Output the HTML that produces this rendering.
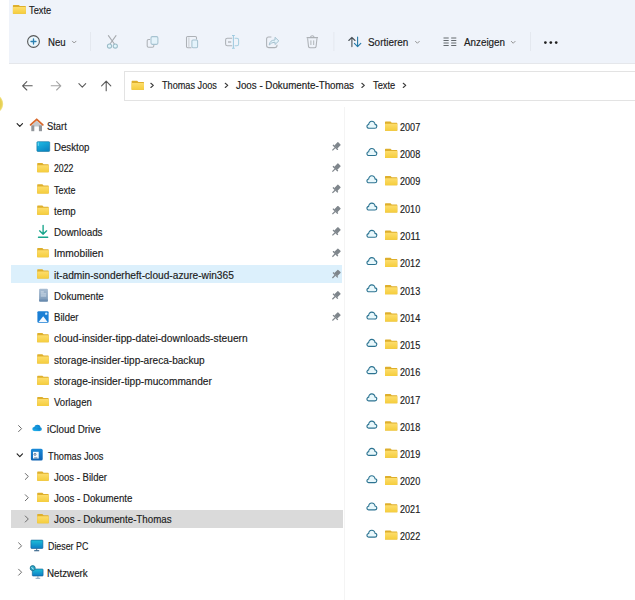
<!DOCTYPE html>
<html><head><meta charset="utf-8"><style>
html,body{margin:0;padding:0;}
body{width:635px;height:600px;overflow:hidden;position:relative;background:#fff;font-family:"Liberation Sans",sans-serif;}
.t{position:absolute;white-space:nowrap;line-height:1;transform-origin:0 0;-webkit-text-stroke:0.15px currentColor;}
#hdr{position:absolute;left:9px;top:0;width:626px;height:63px;background:#eff3fa;border-bottom:1px solid #e5e7eb;}
#addr{position:absolute;left:123.5px;top:71px;width:600px;height:28px;border:1px solid #e3e3e3;background:#fff;}
#ov{position:absolute;left:0;top:0;}
</style></head><body>
<div id="hdr"></div>
<div id="addr"></div>
<div style="position:absolute;left:11.2px;top:265px;width:330.5px;height:18px;background:#dcf0fc"></div>
<div style="position:absolute;left:11.2px;top:510px;width:331.4px;height:18px;background:#dadada"></div>
<div style="position:absolute;left:344.4px;top:107px;width:1px;height:493px;background:#f4f4f4"></div>
<svg id="ov" width="635" height="600" viewBox="0 0 635 600"><defs>
<linearGradient id="fg" x1="0" y1="0" x2="0" y2="1"><stop offset="0" stop-color="#fddd6c"/><stop offset="1" stop-color="#f5cd3c"/></linearGradient>
<linearGradient id="dg" x1="0" y1="0" x2="0.6" y2="1"><stop offset="0" stop-color="#1fbde6"/><stop offset="1" stop-color="#0b88c4"/></linearGradient>
<linearGradient id="pcg" x1="0" y1="0" x2="0" y2="1"><stop offset="0" stop-color="#1fbfd8"/><stop offset="1" stop-color="#0c7cc4"/></linearGradient>
<linearGradient id="icg" x1="0" y1="1" x2="1" y2="0"><stop offset="0" stop-color="#22b8f0"/><stop offset="1" stop-color="#0a79c9"/></linearGradient>
<linearGradient id="ujg" x1="0" y1="0" x2="0" y2="1"><stop offset="0" stop-color="#1a8ad8"/><stop offset="1" stop-color="#0c60b2"/></linearGradient>
<linearGradient id="docg" x1="0" y1="0" x2="0" y2="1"><stop offset="0" stop-color="#a9bdd2"/><stop offset="1" stop-color="#7896b6"/></linearGradient>
<radialGradient id="yb" cx="0.45" cy="0.5" r="0.55"><stop offset="0" stop-color="#d8bd3a"/><stop offset="0.8" stop-color="#e9d45a"/><stop offset="1" stop-color="#f3e7a0"/></radialGradient>
</defs>
<ellipse cx="-3.2" cy="103.9" rx="6.4" ry="8.1" fill="url(#yb)"/>
<path d="M12.90,13.70 V5.50 Q12.90,4.90 13.50,4.90 H18.75 L19.95,6.10 H25.30 Q25.90,6.10 25.90,6.70 V13.70 Z" fill="#deaf2c"/><rect x="12.90" y="7.10" width="13.00" height="6.60" rx="0.6" fill="url(#fg)"/>
<circle cx="33.5" cy="41.5" r="5.9" fill="#eaf6fc" stroke="#575757" stroke-width="1.1"/>
<path d="M31.0,41.5 H36.0 M33.5,39.0 V44.0" stroke="#2a7fb0" stroke-width="1.3" stroke-linecap="round"/>
<polyline points="72.40,41.20 74.20,43.00 76.00,41.20" fill="none" stroke="#8a8a8a" stroke-width="0.9" stroke-linecap="round" stroke-linejoin="round"/>
<rect x="90" y="32" width="1" height="19" fill="#e4e8ef"/>
<path d="M108.4,35.6 L114.4,44.0 M116.0,35.6 L110.0,44.0" stroke="#a7aaaf" stroke-width="1.1" stroke-linecap="round"/>
<circle cx="109.5" cy="46.0" r="2.1" fill="#e2f5fb" stroke="#9bbcc8" stroke-width="1.05"/><circle cx="115.3" cy="46.0" r="2.1" fill="#e2f5fb" stroke="#9bbcc8" stroke-width="1.05"/>
<path d="M150.2,39.4 H148.6 Q147.2,39.4 147.2,40.8 V46 Q147.2,47.3 148.6,47.3 H152.4 Q153.8,47.3 153.8,46 V44.9" fill="none" stroke="#adb1b6" stroke-width="1.05"/>
<rect x="151.0" y="36.6" width="6.9" height="7.8" rx="1.3" fill="#e4f3fb" stroke="#a6c2d0" stroke-width="1.05"/>
<path d="M191.4,47.7 H187.7 Q186.5,47.7 186.5,46.5 V37.6 Q186.5,36.4 187.7,36.4 H195.3 Q196.5,36.4 196.5,37.6 V39.6" fill="none" stroke="#adb1b6" stroke-width="1.05"/>
<path d="M188.9,37.4 V46.8" stroke="#c3c6ca" stroke-width="0.9"/>
<rect x="191.9" y="40.0" width="5.7" height="7.7" rx="1.1" fill="#e4f3fb" stroke="#a6c2d0" stroke-width="1.05"/>
<path d="M232.2,38.2 H227.4 Q225.6,38.2 225.6,40 V44 Q225.6,45.8 227.4,45.8 H232.2" fill="none" stroke="#adb1b6" stroke-width="1.05"/>
<path d="M234.6,38.2 H236.8 Q238.6,38.2 238.6,40 V44 Q238.6,45.8 236.8,45.8 H234.6" fill="none" stroke="#a7cfe0" stroke-width="1.05"/>
<path d="M228,42 H231.2" stroke="#adb1b6" stroke-width="1.3"/>
<path d="M233.4,35.4 V48.2 M232,35.4 H234.8 M232,48.2 H234.8" stroke="#9fcbe0" stroke-width="1.05" fill="none"/>
<path d="M271.4,36.9 H268.6 Q266.6,36.9 266.6,38.9 V45.6 Q266.6,47.6 268.6,47.6 H275 Q277,47.6 277,45.6 V44.8" fill="none" stroke="#adb1b6" stroke-width="1.05"/>
<path d="M269.2,45.0 Q269.8,40.0 275.0,40.0 V37.3 L278.8,40.9 L275.0,44.5 V42.2 Q271.4,42.2 269.2,45.0 Z" fill="#e4f3fb" stroke="#a6c2d0" stroke-width="1.0" stroke-linejoin="round"/>
<path d="M306.6,37.6 H318 M310.4,37.4 Q310.8,35.8 312.3,35.8 Q313.8,35.8 314.2,37.4" fill="none" stroke="#adb1b6" stroke-width="1.05"/>
<path d="M307.6,38.2 L308.5,46.4 Q308.7,47.8 310.2,47.8 H314.4 Q315.9,47.8 316.1,46.4 L317,38.2" fill="none" stroke="#adb1b6" stroke-width="1.05"/>
<path d="M310.9,40.4 V45.0 M313.7,40.4 V45.0" stroke="#b1b5b9" stroke-width="1"/>
<rect x="333.4" y="32" width="1" height="19" fill="#e4e8ef"/>
<path d="M351.9,46.6 V37.4 M348.8,40.5 L351.9,37.4 L355.0,40.5" fill="none" stroke="#4b5258" stroke-width="1.1" stroke-linecap="round" stroke-linejoin="round"/>
<path d="M357.6,37.0 V46.6 M354.4,43.4 L357.6,46.6 L360.8,43.4" fill="none" stroke="#2479a8" stroke-width="1.1" stroke-linecap="round" stroke-linejoin="round"/>
<polyline points="415.50,41.35 417.40,43.25 419.30,41.35" fill="none" stroke="#8a8a8a" stroke-width="0.9" stroke-linecap="round" stroke-linejoin="round"/>
<path d="M443.5,38.00 H448.7 M451.2,38.00 H456.3" stroke="#5c6166" stroke-width="0.95"/>
<path d="M443.5,40.50 H448.7 M451.2,40.50 H456.3" stroke="#5c6166" stroke-width="0.95"/>
<path d="M443.5,43.00 H448.7 M451.2,43.00 H456.3" stroke="#5c6166" stroke-width="0.95"/>
<path d="M443.5,45.50 H448.7 M451.2,45.50 H456.3" stroke="#5c6166" stroke-width="0.95"/>
<polyline points="511.30,41.35 513.20,43.25 515.10,41.35" fill="none" stroke="#8a8a8a" stroke-width="0.9" stroke-linecap="round" stroke-linejoin="round"/>
<rect x="530" y="32" width="1" height="19" fill="#e4e8ef"/>
<circle cx="545.4" cy="42.6" r="1.35" fill="#1f1f1f"/>
<circle cx="550.8" cy="42.6" r="1.35" fill="#1f1f1f"/>
<circle cx="556.2" cy="42.6" r="1.35" fill="#1f1f1f"/>
<path d="M22.6,85.8 H32.2 M26.8,81.6 L22.6,85.8 L26.8,90" fill="none" stroke="#5a5a5a" stroke-width="1.1" stroke-linecap="round" stroke-linejoin="round"/>
<path d="M51.2,85.8 H60.8 M56.6,81.6 L60.8,85.8 L56.6,90" fill="none" stroke="#a3a3a3" stroke-width="1.1" stroke-linecap="round" stroke-linejoin="round"/>
<polyline points="78.90,83.70 82.30,87.10 85.70,83.70" fill="none" stroke="#5a5a5a" stroke-width="1.1" stroke-linecap="round" stroke-linejoin="round"/>
<path d="M106.2,90.8 V81.2 M101.6,85.8 L106.2,81.2 L110.8,85.8" fill="none" stroke="#5a5a5a" stroke-width="1.1" stroke-linecap="round" stroke-linejoin="round"/>
<path d="M131.60,89.80 V81.40 Q131.60,80.80 132.20,80.80 H137.18 L138.38,82.00 H143.40 Q144.00,82.00 144.00,82.60 V89.80 Z" fill="#deaf2c"/><rect x="131.60" y="83.00" width="12.40" height="6.80" rx="0.6" fill="url(#fg)"/>
<polyline points="150.85,83.30 153.35,85.40 150.85,87.50" fill="none" stroke="#3c3c3c" stroke-width="1.15" stroke-linecap="round" stroke-linejoin="round"/>
<polyline points="225.25,83.30 227.75,85.40 225.25,87.50" fill="none" stroke="#3c3c3c" stroke-width="1.15" stroke-linecap="round" stroke-linejoin="round"/>
<polyline points="361.85,83.30 364.35,85.40 361.85,87.50" fill="none" stroke="#3c3c3c" stroke-width="1.15" stroke-linecap="round" stroke-linejoin="round"/>
<polyline points="403.25,83.30 405.75,85.40 403.25,87.50" fill="none" stroke="#3c3c3c" stroke-width="1.15" stroke-linecap="round" stroke-linejoin="round"/>
<polyline points="17.10,123.60 19.80,126.40 22.50,123.60" fill="none" stroke="#222" stroke-width="1.15" stroke-linecap="round" stroke-linejoin="round"/>
<path d="M31.6,125.6 L36.7,120.8 L41.8,125.6 V126.4 H31.6 Z" fill="#c4c8cc"/>
<rect x="31.3" y="125.4" width="3.0" height="5.8" fill="#92969b"/><rect x="38.9" y="125.4" width="3.1" height="5.8" fill="#92969b"/>
<path d="M30.6,124.9 L36.7,119.3 L42.8,124.9" fill="none" stroke="#d9692c" stroke-width="1.8" stroke-linecap="round" stroke-linejoin="round"/>
<g transform="translate(335.90,146.87) rotate(45) scale(1.12)"><rect x="-1.9" y="-4.4" width="3.8" height="4.6" rx="0.5" fill="#7f868c"/><rect x="-3.1" y="0" width="6.2" height="1.2" rx="0.4" fill="#7f868c"/><rect x="-0.55" y="1" width="1.1" height="3.4" fill="#7f868c"/></g>
<g transform="translate(335.90,168.14) rotate(45) scale(1.12)"><rect x="-1.9" y="-4.4" width="3.8" height="4.6" rx="0.5" fill="#7f868c"/><rect x="-3.1" y="0" width="6.2" height="1.2" rx="0.4" fill="#7f868c"/><rect x="-0.55" y="1" width="1.1" height="3.4" fill="#7f868c"/></g>
<path d="M37.20,172.14 V163.54 Q37.20,162.94 37.80,162.94 H42.38 L43.58,164.14 H48.10 Q48.70,164.14 48.70,164.74 V172.14 Z" fill="#deaf2c"/><rect x="37.20" y="165.14" width="11.50" height="7.00" rx="0.6" fill="url(#fg)"/>
<g transform="translate(335.90,189.41) rotate(45) scale(1.12)"><rect x="-1.9" y="-4.4" width="3.8" height="4.6" rx="0.5" fill="#7f868c"/><rect x="-3.1" y="0" width="6.2" height="1.2" rx="0.4" fill="#7f868c"/><rect x="-0.55" y="1" width="1.1" height="3.4" fill="#7f868c"/></g>
<path d="M37.20,193.41 V184.81 Q37.20,184.21 37.80,184.21 H42.38 L43.58,185.41 H48.10 Q48.70,185.41 48.70,186.01 V193.41 Z" fill="#deaf2c"/><rect x="37.20" y="186.41" width="11.50" height="7.00" rx="0.6" fill="url(#fg)"/>
<g transform="translate(335.90,210.68) rotate(45) scale(1.12)"><rect x="-1.9" y="-4.4" width="3.8" height="4.6" rx="0.5" fill="#7f868c"/><rect x="-3.1" y="0" width="6.2" height="1.2" rx="0.4" fill="#7f868c"/><rect x="-0.55" y="1" width="1.1" height="3.4" fill="#7f868c"/></g>
<path d="M37.20,214.68 V206.08 Q37.20,205.48 37.80,205.48 H42.38 L43.58,206.68 H48.10 Q48.70,206.68 48.70,207.28 V214.68 Z" fill="#deaf2c"/><rect x="37.20" y="207.68" width="11.50" height="7.00" rx="0.6" fill="url(#fg)"/>
<g transform="translate(335.90,231.95) rotate(45) scale(1.12)"><rect x="-1.9" y="-4.4" width="3.8" height="4.6" rx="0.5" fill="#7f868c"/><rect x="-3.1" y="0" width="6.2" height="1.2" rx="0.4" fill="#7f868c"/><rect x="-0.55" y="1" width="1.1" height="3.4" fill="#7f868c"/></g>
<g transform="translate(335.90,253.22) rotate(45) scale(1.12)"><rect x="-1.9" y="-4.4" width="3.8" height="4.6" rx="0.5" fill="#7f868c"/><rect x="-3.1" y="0" width="6.2" height="1.2" rx="0.4" fill="#7f868c"/><rect x="-0.55" y="1" width="1.1" height="3.4" fill="#7f868c"/></g>
<path d="M37.20,257.22 V248.62 Q37.20,248.02 37.80,248.02 H42.38 L43.58,249.22 H48.10 Q48.70,249.22 48.70,249.82 V257.22 Z" fill="#deaf2c"/><rect x="37.20" y="250.22" width="11.50" height="7.00" rx="0.6" fill="url(#fg)"/>
<g transform="translate(335.90,274.49) rotate(45) scale(1.12)"><rect x="-1.9" y="-4.4" width="3.8" height="4.6" rx="0.5" fill="#7f868c"/><rect x="-3.1" y="0" width="6.2" height="1.2" rx="0.4" fill="#7f868c"/><rect x="-0.55" y="1" width="1.1" height="3.4" fill="#7f868c"/></g>
<path d="M37.20,278.49 V269.89 Q37.20,269.29 37.80,269.29 H42.38 L43.58,270.49 H48.10 Q48.70,270.49 48.70,271.09 V278.49 Z" fill="#deaf2c"/><rect x="37.20" y="271.49" width="11.50" height="7.00" rx="0.6" fill="url(#fg)"/>
<g transform="translate(335.90,295.76) rotate(45) scale(1.12)"><rect x="-1.9" y="-4.4" width="3.8" height="4.6" rx="0.5" fill="#7f868c"/><rect x="-3.1" y="0" width="6.2" height="1.2" rx="0.4" fill="#7f868c"/><rect x="-0.55" y="1" width="1.1" height="3.4" fill="#7f868c"/></g>
<g transform="translate(335.90,317.03) rotate(45) scale(1.12)"><rect x="-1.9" y="-4.4" width="3.8" height="4.6" rx="0.5" fill="#7f868c"/><rect x="-3.1" y="0" width="6.2" height="1.2" rx="0.4" fill="#7f868c"/><rect x="-0.55" y="1" width="1.1" height="3.4" fill="#7f868c"/></g>
<path d="M37.20,342.30 V333.70 Q37.20,333.10 37.80,333.10 H42.38 L43.58,334.30 H48.10 Q48.70,334.30 48.70,334.90 V342.30 Z" fill="#deaf2c"/><rect x="37.20" y="335.30" width="11.50" height="7.00" rx="0.6" fill="url(#fg)"/>
<path d="M37.20,363.57 V354.97 Q37.20,354.37 37.80,354.37 H42.38 L43.58,355.57 H48.10 Q48.70,355.57 48.70,356.17 V363.57 Z" fill="#deaf2c"/><rect x="37.20" y="356.57" width="11.50" height="7.00" rx="0.6" fill="url(#fg)"/>
<path d="M37.20,384.84 V376.24 Q37.20,375.64 37.80,375.64 H42.38 L43.58,376.84 H48.10 Q48.70,376.84 48.70,377.44 V384.84 Z" fill="#deaf2c"/><rect x="37.20" y="377.84" width="11.50" height="7.00" rx="0.6" fill="url(#fg)"/>
<path d="M37.20,406.11 V397.51 Q37.20,396.91 37.80,396.91 H42.38 L43.58,398.11 H48.10 Q48.70,398.11 48.70,398.71 V406.11 Z" fill="#deaf2c"/><rect x="37.20" y="399.11" width="11.50" height="7.00" rx="0.6" fill="url(#fg)"/>
<rect x="36.9" y="141.67" width="12.8" height="9.8" rx="0.9" fill="url(#dg)" stroke="#0d6f9c" stroke-width="0.6"/>
<rect x="37.8" y="142.47" width="0.9" height="3.4" fill="#8ae6fb" opacity="0.9"/>
<path d="M43.1,225.35 V234.35 M39.6,230.85 L43.1,234.35 L46.6,230.85 M38.5,237.25 H47.7" fill="none" stroke="#17a58b" stroke-width="1.35" stroke-linecap="round" stroke-linejoin="round"/>
<rect x="39.1" y="288.86" width="8.8" height="12.8" rx="1" fill="url(#docg)"/>
<path d="M40.8,291.96 H43.8 M40.8,293.96 H46.2 M40.8,295.96 H46.2" stroke="#d8e3ee" stroke-width="0.9"/>
<rect x="39.1" y="299.56" width="8.8" height="1.8" fill="#6386ab" opacity="0.7"/>
<rect x="37.4" y="311.13" width="11.2" height="11.5" rx="1.2" fill="#1a7fd5"/>
<path d="M38.6,322.03 L43.2,316.23 L47.6,322.03 Z" fill="#f4f9ff"/>
<circle cx="46.2" cy="313.63" r="1.2" fill="#cfeaff"/>
<polyline points="18.60,425.60 21.60,428.60 18.60,431.60" fill="none" stroke="#6b6b6b" stroke-width="1.0" stroke-linecap="round" stroke-linejoin="round"/>
<g fill="url(#icg)"><circle cx="37.4" cy="427.9" r="3.1"/><circle cx="34.3" cy="429.0" r="2.0"/><circle cx="39.9" cy="429.1" r="1.9"/><rect x="34.3" y="428.2" width="5.6" height="2.9"/></g>
<polyline points="17.10,453.80 19.80,456.60 22.50,453.80" fill="none" stroke="#222" stroke-width="1.15" stroke-linecap="round" stroke-linejoin="round"/>
<rect x="30.9" y="448.80" width="11.8" height="11.8" rx="1.6" fill="url(#ujg)"/>
<rect x="33.0" y="451.80" width="5.7" height="6.7" fill="#f3f9ff"/>
<path d="M35,454.40 m-1,0 a1,1 0 1 0 2,0 a1,1 0 1 0 -2,0 M34.2,457.90 H37.4" stroke="#3a5f86" stroke-width="0.8" fill="none"/>
<polyline points="25.30,473.47 28.30,476.47 25.30,479.47" fill="none" stroke="#6b6b6b" stroke-width="1.0" stroke-linecap="round" stroke-linejoin="round"/>
<path d="M37.20,480.67 V472.07 Q37.20,471.47 37.80,471.47 H42.38 L43.58,472.67 H48.10 Q48.70,472.67 48.70,473.27 V480.67 Z" fill="#deaf2c"/><rect x="37.20" y="473.67" width="11.50" height="7.00" rx="0.6" fill="url(#fg)"/>
<polyline points="25.30,494.74 28.30,497.74 25.30,500.74" fill="none" stroke="#6b6b6b" stroke-width="1.0" stroke-linecap="round" stroke-linejoin="round"/>
<path d="M37.20,501.94 V493.34 Q37.20,492.74 37.80,492.74 H42.38 L43.58,493.94 H48.10 Q48.70,493.94 48.70,494.54 V501.94 Z" fill="#deaf2c"/><rect x="37.20" y="494.94" width="11.50" height="7.00" rx="0.6" fill="url(#fg)"/>
<polyline points="25.30,516.01 28.30,519.01 25.30,522.01" fill="none" stroke="#6b6b6b" stroke-width="1.0" stroke-linecap="round" stroke-linejoin="round"/>
<path d="M37.20,523.21 V514.61 Q37.20,514.01 37.80,514.01 H42.38 L43.58,515.21 H48.10 Q48.70,515.21 48.70,515.81 V523.21 Z" fill="#deaf2c"/><rect x="37.20" y="516.21" width="11.50" height="7.00" rx="0.6" fill="url(#fg)"/>
<polyline points="18.60,542.81 21.60,545.81 18.60,548.81" fill="none" stroke="#6b6b6b" stroke-width="1.0" stroke-linecap="round" stroke-linejoin="round"/>
<rect x="30.9" y="540.11" width="12" height="8.4" rx="0.7" fill="url(#pcg)" stroke="#0d5a92" stroke-width="0.6"/>
<path d="M34.2,550.71 H39.2" stroke="#2f5f86" stroke-width="1.1"/><path d="M36.7,548.61 V550.41" stroke="#2f5f86" stroke-width="0.9"/>
<polyline points="18.60,569.21 21.60,572.21 18.60,575.21" fill="none" stroke="#6b6b6b" stroke-width="1.0" stroke-linecap="round" stroke-linejoin="round"/>
<rect x="32.3" y="569.01" width="10.8" height="7.0" rx="0.7" fill="url(#pcg)" stroke="#0d5a92" stroke-width="0.6"/>
<path d="M35.6,578.31 H40.2" stroke="#8aa6bd" stroke-width="1.0"/><path d="M37.9,576.11 V578.11" stroke="#6d8aa3" stroke-width="0.8"/>
<circle cx="32.7" cy="568.11" r="2.5" fill="#2aa8c8" stroke="#1c6f8e" stroke-width="0.9"/>
<path d="M31.6,567.21 L33.6,569.41" stroke="#c8f0fb" stroke-width="1.0" fill="none"/>
<path transform="translate(366.70,120.95)" d="M2.2,7.3 H8.0 A1.95,1.95 0 0 0 8.3,3.4 A3.15,3.15 0 0 0 2.0,3.6 A1.85,1.85 0 0 0 2.2,7.3 Z" fill="#e9f8fc" stroke="#2c7391" stroke-width="1.1" stroke-linejoin="round"/>
<path d="M385.00,130.70 V122.10 Q385.00,121.50 385.60,121.50 H390.54 L391.74,122.70 H396.70 Q397.30,122.70 397.30,123.30 V130.70 Z" fill="#deaf2c"/><rect x="385.00" y="123.70" width="12.30" height="7.00" rx="0.6" fill="url(#fg)"/>
<path transform="translate(366.70,148.21)" d="M2.2,7.3 H8.0 A1.95,1.95 0 0 0 8.3,3.4 A3.15,3.15 0 0 0 2.0,3.6 A1.85,1.85 0 0 0 2.2,7.3 Z" fill="#e9f8fc" stroke="#2c7391" stroke-width="1.1" stroke-linejoin="round"/>
<path d="M385.00,157.96 V149.36 Q385.00,148.76 385.60,148.76 H390.54 L391.74,149.96 H396.70 Q397.30,149.96 397.30,150.56 V157.96 Z" fill="#deaf2c"/><rect x="385.00" y="150.96" width="12.30" height="7.00" rx="0.6" fill="url(#fg)"/>
<path transform="translate(366.70,175.47)" d="M2.2,7.3 H8.0 A1.95,1.95 0 0 0 8.3,3.4 A3.15,3.15 0 0 0 2.0,3.6 A1.85,1.85 0 0 0 2.2,7.3 Z" fill="#e9f8fc" stroke="#2c7391" stroke-width="1.1" stroke-linejoin="round"/>
<path d="M385.00,185.22 V176.62 Q385.00,176.02 385.60,176.02 H390.54 L391.74,177.22 H396.70 Q397.30,177.22 397.30,177.82 V185.22 Z" fill="#deaf2c"/><rect x="385.00" y="178.22" width="12.30" height="7.00" rx="0.6" fill="url(#fg)"/>
<path transform="translate(366.70,202.73)" d="M2.2,7.3 H8.0 A1.95,1.95 0 0 0 8.3,3.4 A3.15,3.15 0 0 0 2.0,3.6 A1.85,1.85 0 0 0 2.2,7.3 Z" fill="#e9f8fc" stroke="#2c7391" stroke-width="1.1" stroke-linejoin="round"/>
<path d="M385.00,212.48 V203.88 Q385.00,203.28 385.60,203.28 H390.54 L391.74,204.48 H396.70 Q397.30,204.48 397.30,205.08 V212.48 Z" fill="#deaf2c"/><rect x="385.00" y="205.48" width="12.30" height="7.00" rx="0.6" fill="url(#fg)"/>
<path transform="translate(366.70,229.99)" d="M2.2,7.3 H8.0 A1.95,1.95 0 0 0 8.3,3.4 A3.15,3.15 0 0 0 2.0,3.6 A1.85,1.85 0 0 0 2.2,7.3 Z" fill="#e9f8fc" stroke="#2c7391" stroke-width="1.1" stroke-linejoin="round"/>
<path d="M385.00,239.74 V231.14 Q385.00,230.54 385.60,230.54 H390.54 L391.74,231.74 H396.70 Q397.30,231.74 397.30,232.34 V239.74 Z" fill="#deaf2c"/><rect x="385.00" y="232.74" width="12.30" height="7.00" rx="0.6" fill="url(#fg)"/>
<path transform="translate(366.70,257.25)" d="M2.2,7.3 H8.0 A1.95,1.95 0 0 0 8.3,3.4 A3.15,3.15 0 0 0 2.0,3.6 A1.85,1.85 0 0 0 2.2,7.3 Z" fill="#e9f8fc" stroke="#2c7391" stroke-width="1.1" stroke-linejoin="round"/>
<path d="M385.00,267.00 V258.40 Q385.00,257.80 385.60,257.80 H390.54 L391.74,259.00 H396.70 Q397.30,259.00 397.30,259.60 V267.00 Z" fill="#deaf2c"/><rect x="385.00" y="260.00" width="12.30" height="7.00" rx="0.6" fill="url(#fg)"/>
<path transform="translate(366.70,284.51)" d="M2.2,7.3 H8.0 A1.95,1.95 0 0 0 8.3,3.4 A3.15,3.15 0 0 0 2.0,3.6 A1.85,1.85 0 0 0 2.2,7.3 Z" fill="#e9f8fc" stroke="#2c7391" stroke-width="1.1" stroke-linejoin="round"/>
<path d="M385.00,294.26 V285.66 Q385.00,285.06 385.60,285.06 H390.54 L391.74,286.26 H396.70 Q397.30,286.26 397.30,286.86 V294.26 Z" fill="#deaf2c"/><rect x="385.00" y="287.26" width="12.30" height="7.00" rx="0.6" fill="url(#fg)"/>
<path transform="translate(366.70,311.77)" d="M2.2,7.3 H8.0 A1.95,1.95 0 0 0 8.3,3.4 A3.15,3.15 0 0 0 2.0,3.6 A1.85,1.85 0 0 0 2.2,7.3 Z" fill="#e9f8fc" stroke="#2c7391" stroke-width="1.1" stroke-linejoin="round"/>
<path d="M385.00,321.52 V312.92 Q385.00,312.32 385.60,312.32 H390.54 L391.74,313.52 H396.70 Q397.30,313.52 397.30,314.12 V321.52 Z" fill="#deaf2c"/><rect x="385.00" y="314.52" width="12.30" height="7.00" rx="0.6" fill="url(#fg)"/>
<path transform="translate(366.70,339.03)" d="M2.2,7.3 H8.0 A1.95,1.95 0 0 0 8.3,3.4 A3.15,3.15 0 0 0 2.0,3.6 A1.85,1.85 0 0 0 2.2,7.3 Z" fill="#e9f8fc" stroke="#2c7391" stroke-width="1.1" stroke-linejoin="round"/>
<path d="M385.00,348.78 V340.18 Q385.00,339.58 385.60,339.58 H390.54 L391.74,340.78 H396.70 Q397.30,340.78 397.30,341.38 V348.78 Z" fill="#deaf2c"/><rect x="385.00" y="341.78" width="12.30" height="7.00" rx="0.6" fill="url(#fg)"/>
<path transform="translate(366.70,366.29)" d="M2.2,7.3 H8.0 A1.95,1.95 0 0 0 8.3,3.4 A3.15,3.15 0 0 0 2.0,3.6 A1.85,1.85 0 0 0 2.2,7.3 Z" fill="#e9f8fc" stroke="#2c7391" stroke-width="1.1" stroke-linejoin="round"/>
<path d="M385.00,376.04 V367.44 Q385.00,366.84 385.60,366.84 H390.54 L391.74,368.04 H396.70 Q397.30,368.04 397.30,368.64 V376.04 Z" fill="#deaf2c"/><rect x="385.00" y="369.04" width="12.30" height="7.00" rx="0.6" fill="url(#fg)"/>
<path transform="translate(366.70,393.55)" d="M2.2,7.3 H8.0 A1.95,1.95 0 0 0 8.3,3.4 A3.15,3.15 0 0 0 2.0,3.6 A1.85,1.85 0 0 0 2.2,7.3 Z" fill="#e9f8fc" stroke="#2c7391" stroke-width="1.1" stroke-linejoin="round"/>
<path d="M385.00,403.30 V394.70 Q385.00,394.10 385.60,394.10 H390.54 L391.74,395.30 H396.70 Q397.30,395.30 397.30,395.90 V403.30 Z" fill="#deaf2c"/><rect x="385.00" y="396.30" width="12.30" height="7.00" rx="0.6" fill="url(#fg)"/>
<path transform="translate(366.70,420.81)" d="M2.2,7.3 H8.0 A1.95,1.95 0 0 0 8.3,3.4 A3.15,3.15 0 0 0 2.0,3.6 A1.85,1.85 0 0 0 2.2,7.3 Z" fill="#e9f8fc" stroke="#2c7391" stroke-width="1.1" stroke-linejoin="round"/>
<path d="M385.00,430.56 V421.96 Q385.00,421.36 385.60,421.36 H390.54 L391.74,422.56 H396.70 Q397.30,422.56 397.30,423.16 V430.56 Z" fill="#deaf2c"/><rect x="385.00" y="423.56" width="12.30" height="7.00" rx="0.6" fill="url(#fg)"/>
<path transform="translate(366.70,448.07)" d="M2.2,7.3 H8.0 A1.95,1.95 0 0 0 8.3,3.4 A3.15,3.15 0 0 0 2.0,3.6 A1.85,1.85 0 0 0 2.2,7.3 Z" fill="#e9f8fc" stroke="#2c7391" stroke-width="1.1" stroke-linejoin="round"/>
<path d="M385.00,457.82 V449.22 Q385.00,448.62 385.60,448.62 H390.54 L391.74,449.82 H396.70 Q397.30,449.82 397.30,450.42 V457.82 Z" fill="#deaf2c"/><rect x="385.00" y="450.82" width="12.30" height="7.00" rx="0.6" fill="url(#fg)"/>
<path transform="translate(366.70,475.33)" d="M2.2,7.3 H8.0 A1.95,1.95 0 0 0 8.3,3.4 A3.15,3.15 0 0 0 2.0,3.6 A1.85,1.85 0 0 0 2.2,7.3 Z" fill="#e9f8fc" stroke="#2c7391" stroke-width="1.1" stroke-linejoin="round"/>
<path d="M385.00,485.08 V476.48 Q385.00,475.88 385.60,475.88 H390.54 L391.74,477.08 H396.70 Q397.30,477.08 397.30,477.68 V485.08 Z" fill="#deaf2c"/><rect x="385.00" y="478.08" width="12.30" height="7.00" rx="0.6" fill="url(#fg)"/>
<path transform="translate(366.70,502.59)" d="M2.2,7.3 H8.0 A1.95,1.95 0 0 0 8.3,3.4 A3.15,3.15 0 0 0 2.0,3.6 A1.85,1.85 0 0 0 2.2,7.3 Z" fill="#e9f8fc" stroke="#2c7391" stroke-width="1.1" stroke-linejoin="round"/>
<path d="M385.00,512.34 V503.74 Q385.00,503.14 385.60,503.14 H390.54 L391.74,504.34 H396.70 Q397.30,504.34 397.30,504.94 V512.34 Z" fill="#deaf2c"/><rect x="385.00" y="505.34" width="12.30" height="7.00" rx="0.6" fill="url(#fg)"/>
<path transform="translate(366.70,529.85)" d="M2.2,7.3 H8.0 A1.95,1.95 0 0 0 8.3,3.4 A3.15,3.15 0 0 0 2.0,3.6 A1.85,1.85 0 0 0 2.2,7.3 Z" fill="#e9f8fc" stroke="#2c7391" stroke-width="1.1" stroke-linejoin="round"/>
<path d="M385.00,539.60 V531.00 Q385.00,530.40 385.60,530.40 H390.54 L391.74,531.60 H396.70 Q397.30,531.60 397.30,532.20 V539.60 Z" fill="#deaf2c"/><rect x="385.00" y="532.60" width="12.30" height="7.00" rx="0.6" fill="url(#fg)"/></svg>
<div class="t" style="left:29.30px;top:5.74px;font-size:10.0px;transform:scaleX(0.9289);color:#202020;">Texte</div>
<div class="t" style="left:47.80px;top:38.03px;font-size:10.0px;transform:scaleX(0.9646);color:#202020;">Neu</div>
<div class="t" style="left:368.30px;top:38.34px;font-size:10.0px;transform:scaleX(0.9926);color:#202020;">Sortieren</div>
<div class="t" style="left:463.80px;top:38.34px;font-size:10.0px;transform:scaleX(0.9832);color:#202020;">Anzeigen</div>
<div class="t" style="left:162.20px;top:81.23px;font-size:10.0px;transform:scaleX(0.9142);color:#202020;">Thomas Joos</div>
<div class="t" style="left:235.90px;top:81.23px;font-size:10.0px;transform:scaleX(0.9784);color:#202020;">Joos - Dokumente-Thomas</div>
<div class="t" style="left:372.80px;top:81.23px;font-size:10.0px;transform:scaleX(0.9289);color:#202020;">Texte</div>
<div class="t" style="left:46.90px;top:121.73px;font-size:10.0px;transform:scaleX(0.9384);color:#202020;">Start</div>
<div class="t" style="left:54.20px;top:143.00px;font-size:10.0px;transform:scaleX(0.9646);color:#202020;">Desktop</div>
<div class="t" style="left:54.20px;top:164.27px;font-size:10.0px;transform:scaleX(0.8719);color:#202020;">2022</div>
<div class="t" style="left:54.20px;top:185.54px;font-size:10.0px;transform:scaleX(0.8954);color:#202020;">Texte</div>
<div class="t" style="left:54.20px;top:206.81px;font-size:10.0px;transform:scaleX(0.9753);color:#202020;">temp</div>
<div class="t" style="left:54.20px;top:228.08px;font-size:10.0px;transform:scaleX(0.9808);color:#202020;">Downloads</div>
<div class="t" style="left:54.20px;top:249.35px;font-size:10.0px;transform:scaleX(1.0196);color:#202020;">Immobilien</div>
<div class="t" style="left:54.20px;top:270.62px;font-size:10.0px;transform:scaleX(1.0173);color:#202020;">it-admin-sonderheft-cloud-azure-win365</div>
<div class="t" style="left:54.20px;top:291.89px;font-size:10.0px;transform:scaleX(0.9736);color:#202020;">Dokumente</div>
<div class="t" style="left:54.20px;top:313.17px;font-size:10.0px;transform:scaleX(0.9589);color:#202020;">Bilder</div>
<div class="t" style="left:54.20px;top:334.44px;font-size:10.0px;transform:scaleX(1.0249);color:#202020;">cloud-insider-tipp-datei-downloads-steuern</div>
<div class="t" style="left:54.20px;top:355.71px;font-size:10.0px;transform:scaleX(1.0074);color:#202020;">storage-insider-tipp-areca-backup</div>
<div class="t" style="left:54.20px;top:376.98px;font-size:10.0px;transform:scaleX(1.0141);color:#202020;">storage-insider-tipp-mucommander</div>
<div class="t" style="left:54.20px;top:398.25px;font-size:10.0px;transform:scaleX(0.9570);color:#202020;">Vorlagen</div>
<div class="t" style="left:46.90px;top:425.04px;font-size:10.0px;transform:scaleX(0.9862);color:#202020;">iCloud Drive</div>
<div class="t" style="left:47.60px;top:451.54px;font-size:10.0px;transform:scaleX(0.9226);color:#202020;">Thomas Joos</div>
<div class="t" style="left:53.90px;top:472.81px;font-size:10.0px;transform:scaleX(0.9532);color:#202020;">Joos - Bilder</div>
<div class="t" style="left:53.90px;top:494.08px;font-size:10.0px;transform:scaleX(0.9661);color:#202020;">Joos - Dokumente</div>
<div class="t" style="left:53.90px;top:515.35px;font-size:10.0px;transform:scaleX(0.9751);color:#202020;">Joos - Dokumente-Thomas</div>
<div class="t" style="left:47.50px;top:542.14px;font-size:10.0px;transform:scaleX(0.8847);color:#202020;">Dieser PC</div>
<div class="t" style="left:46.90px;top:568.54px;font-size:10.0px;transform:scaleX(0.9772);color:#202020;">Netzwerk</div>
<div class="t" style="left:400.00px;top:122.93px;font-size:10.0px;transform:scaleX(0.9079);color:#202020;">2007</div>
<div class="t" style="left:400.00px;top:150.19px;font-size:10.0px;transform:scaleX(0.9079);color:#202020;">2008</div>
<div class="t" style="left:400.00px;top:177.45px;font-size:10.0px;transform:scaleX(0.9079);color:#202020;">2009</div>
<div class="t" style="left:400.00px;top:204.71px;font-size:10.0px;transform:scaleX(0.9079);color:#202020;">2010</div>
<div class="t" style="left:400.00px;top:231.97px;font-size:10.0px;transform:scaleX(0.9395);color:#202020;">2011</div>
<div class="t" style="left:400.00px;top:259.24px;font-size:10.0px;transform:scaleX(0.9079);color:#202020;">2012</div>
<div class="t" style="left:400.00px;top:286.50px;font-size:10.0px;transform:scaleX(0.9079);color:#202020;">2013</div>
<div class="t" style="left:400.00px;top:313.75px;font-size:10.0px;transform:scaleX(0.9079);color:#202020;">2014</div>
<div class="t" style="left:400.00px;top:341.01px;font-size:10.0px;transform:scaleX(0.9079);color:#202020;">2015</div>
<div class="t" style="left:400.00px;top:368.27px;font-size:10.0px;transform:scaleX(0.9079);color:#202020;">2016</div>
<div class="t" style="left:400.00px;top:395.54px;font-size:10.0px;transform:scaleX(0.9079);color:#202020;">2017</div>
<div class="t" style="left:400.00px;top:422.80px;font-size:10.0px;transform:scaleX(0.9079);color:#202020;">2018</div>
<div class="t" style="left:400.00px;top:450.06px;font-size:10.0px;transform:scaleX(0.9079);color:#202020;">2019</div>
<div class="t" style="left:400.00px;top:477.31px;font-size:10.0px;transform:scaleX(0.9079);color:#202020;">2020</div>
<div class="t" style="left:400.00px;top:504.58px;font-size:10.0px;transform:scaleX(0.9079);color:#202020;">2021</div>
<div class="t" style="left:400.00px;top:531.84px;font-size:10.0px;transform:scaleX(0.9079);color:#202020;">2022</div>
</body></html>
